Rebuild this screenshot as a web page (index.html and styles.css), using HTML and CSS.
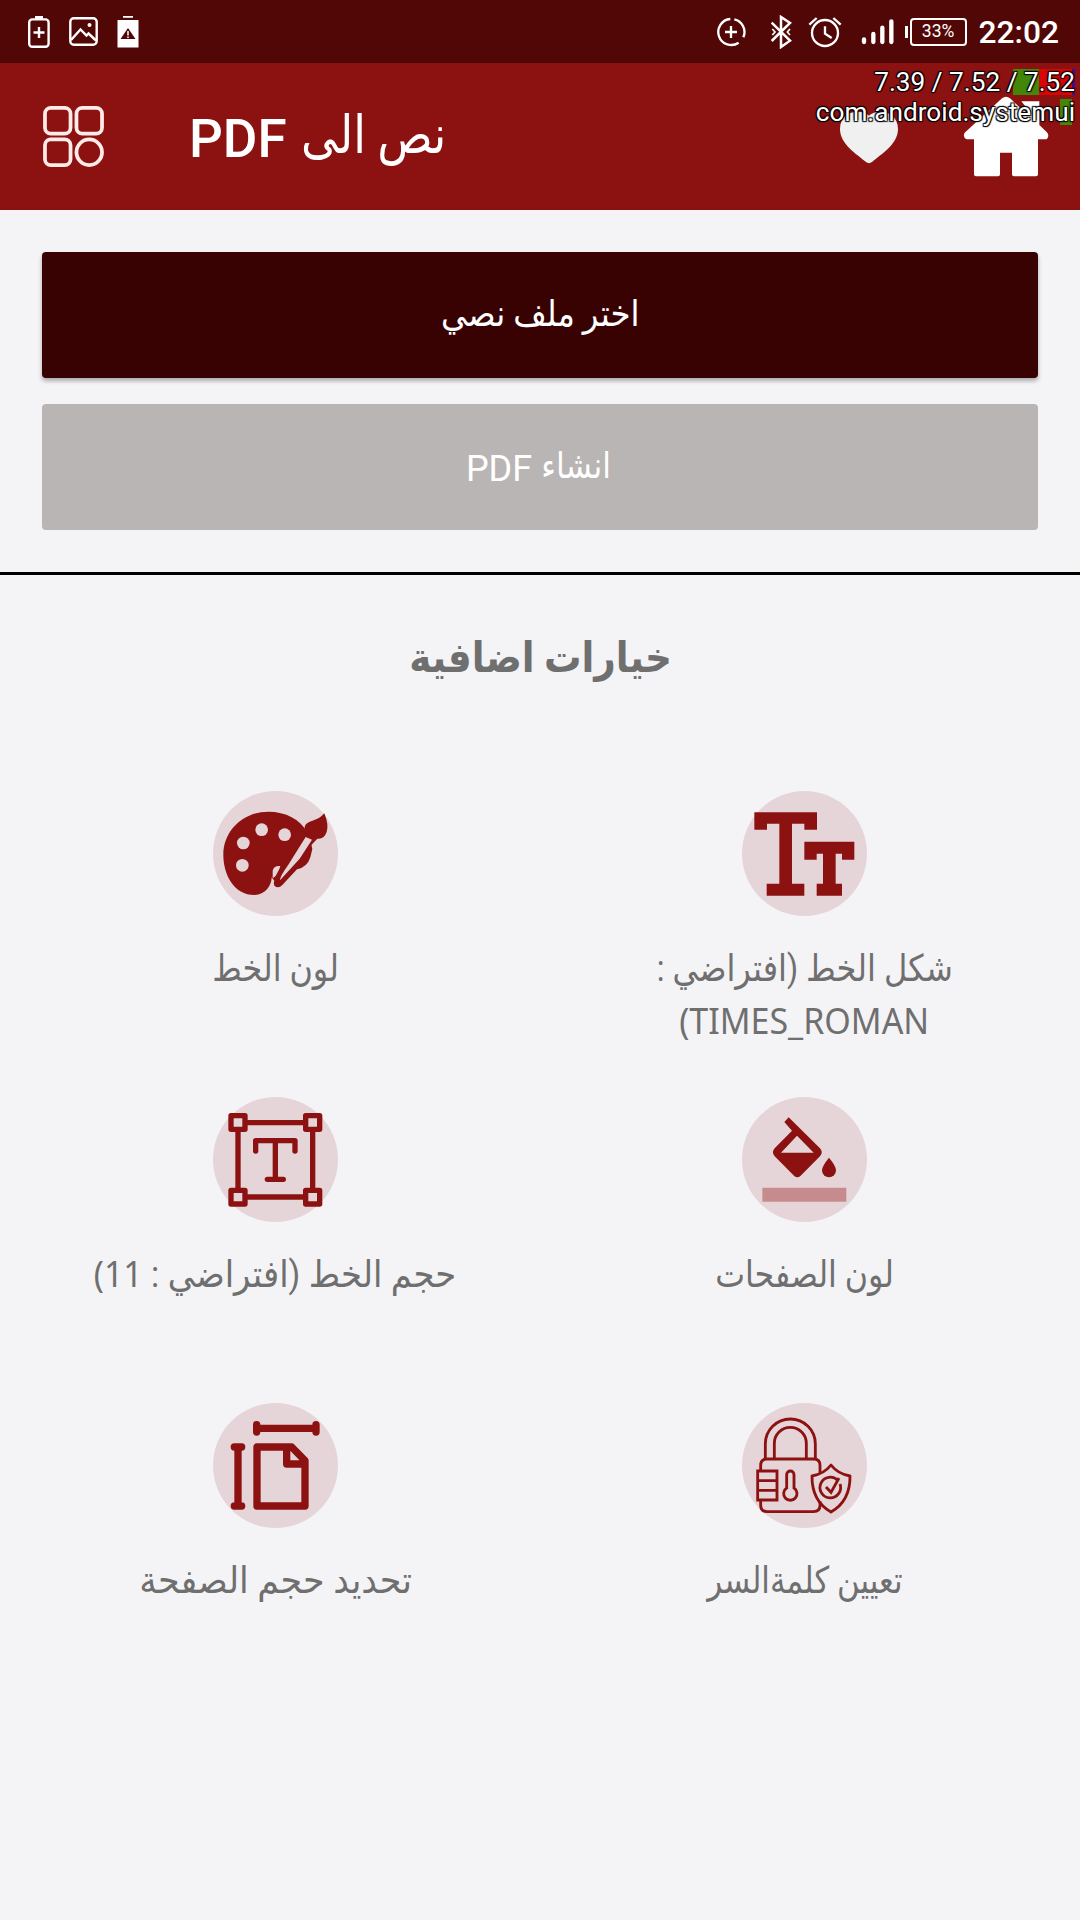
FILE: index.html
```html
<!DOCTYPE html>
<html lang="ar">
<head>
  <meta charset="UTF-8" />
  <meta name="viewport" content="width=device-width, initial-scale=1.0"/>
  <title>نص الى PDF</title>
  <link rel="stylesheet" href="styles.css">
</head>
<body>
  <div class="status-bar">
    <div class="status-left">
      <svg width="22" height="33" viewBox="0 0 22 33"><path d="M7 1h8v4H7z" fill="#fff"/><rect x="1.2" y="4.4" width="19.4" height="27.4" rx="3" fill="none" stroke="#fff" stroke-width="2.4"/><path d="M11 12v11M5.5 17.5h11" stroke="#fff" stroke-width="2.4"/></svg>
      <svg width="29" height="29" viewBox="0 0 29 29"><rect x="1.3" y="1.3" width="26.4" height="26.4" rx="3.5" fill="none" stroke="#fff" stroke-width="2.4"/><path d="M2 23l9.500-10.500 6 6 2-2 7.500 7" fill="none" stroke="#fff" stroke-width="2.4"/><circle cx="20.5" cy="8" r="2" fill="#fff"/></svg>
      <svg width="22" height="32" viewBox="0 0 22 32"><path d="M6 0h10v1.800H6zM.5 4h21v27.500H.5z" fill="#fff"/><path d="M11 12l7.500 11h-15z" fill="#520707"/><path d="M11 15v4.500M11 20.500v1.500" stroke="#fff" stroke-width="1.5"/></svg>
    </div>
    <div class="status-right">
      <svg width="30" height="34" viewBox="78 45 90 102" fill="none" stroke="#fff" stroke-width="7"><path d="M133 58A39 39 0 0 1 160 112M146 128A39 39 0 1 1 121 57"/><path d="M123 78v36M105 96h36"/></svg>
      <svg class="bluetooth" width="22" height="34" viewBox="240 44 66 102" fill="none" stroke="#fff" stroke-width="7.5"><path d="M245 67L300 121L273 140V50L300 68L245 122"/><path d="M247 86l8 9-8 9M300 86l-8 9 8 9" stroke-width="5"/></svg>
      <svg class="alarm" width="34" height="34" viewBox="354 45 102 102" fill="none" stroke="#fff" stroke-width="7"><circle cx="405" cy="99" r="39"/><path d="M405 79v22l20 13M358 74l22-20M430 54l22 20"/></svg>
      <svg class="signal" width="33" height="34" viewBox="514 45 99 102" stroke="#fff" stroke-width="13" stroke-linecap="round"><path d="M523 118v8M551 102v24M578 83v43M605 64v62"/></svg>
      <div class="battery"><span>33%</span></div>
      <span class="clock">22:02</span>
    </div>
  </div>

  <header>
    <svg class="menu" width="61" height="61" viewBox="0 0 62 62" fill="none" stroke="#fdebe8" stroke-width="3.8"><rect x="2" y="2" width="26" height="26" rx="6"/><rect x="34" y="2" width="26" height="26" rx="6"/><rect x="2" y="34" width="26" height="26" rx="6"/><circle cx="47" cy="47" r="13"/></svg>
    <h1 dir="rtl"><span class="ar">نص الى</span> <span class="pdf">PDF</span></h1>
    <svg class="heart" width="60" height="60" viewBox="447 315 180 180"><path d="M537 344C515 322 450 327 450 384C450 430 500 459 528 483Q537 490 546 483C574 459 624 430 624 384C624 327 559 322 537 344z" fill="#f0f0f0"/></svg>
    <svg class="home" width="86" height="84" viewBox="819 281 258 252"><path d="M936 294Q948 284 960 294L994 326V303H1048V374L1070 395Q1080 406 1070 417H1044V522Q1044 528 1038 528H972Q966 528 966 522V457H930V522Q930 528 924 528H858Q852 528 852 522V417H830Q817 410 824 397z" fill="#fff"/><path d="M978 303h16l16 20v14z" fill="#8c1212"/></svg>

    <div class="cpu-overlay">
      <i class="load-user"></i><i class="load-sys"></i><i class="load-irq"></i><i class="load-proc"></i>
      <p>7.39 / 7.52 / 7.52</p>
      <p>com.android.systemui</p>
    </div>
  </header>

  <div class="actions">
    <button class="btn" dir="rtl"><span class="ar w-file">اختر ملف نصي</span></button>
    <button class="btn btn-disabled" dir="rtl"><span class="ar w-create">انشاء</span> <span class="pdf">PDF</span></button>
  </div>

  <h2 dir="rtl"><span class="ar">خيارات اضافية</span></h2>

  <div class="options">
    <div class="option">
      <svg viewBox="38 31 375 375">
        <circle cx="225.5" cy="218.5" r="187.5" fill="#e6d5d8"/>
        <path d="M204 93C257 93 299 116 320 154L334 180C334 225 308 264 290 264L222 300L214 290C214 315 194 343 163 343C100 343 69 281 69 222C69 149 130 93 204 93z"/>
        <g fill="#e6d5d8"><circle cx="184" cy="147" r="19"/><circle cx="253" cy="162" r="19"/><circle cx="129" cy="187" r="19"/><circle cx="126" cy="254" r="19"/><path d="M217 293V270Q220 254 240 256L232 282z"/></g>
        <path d="M304 158L314 149C306 118 350 126 372 98Q386 132 379 154Q371 177 351 174L333 193L336 205L330 230Q321 260 290 266L246 313Q234 326 222 315Q216 300 234 271z"/>
        <path d="M316 169L335 177L298 234L239 299Q238 288 264 252z" fill="#e6d5d8"/>
      </svg>
      <p dir="rtl"><span class="ar w-color">لون الخط</span></p>
    </div>
    <div class="option">
      <svg viewBox="305 31 375 375">
        <circle cx="492.5" cy="218.5" r="187.5" fill="#e6d5d8"/>
        <path d="M342 95H530V147H492V129H455V309H492V345H379V309H417V129H380V147H342zM492 183H642V237H605V219H586V309H605V345H529V309H548V219H529V237H492z"/>
      </svg>
      <p dir="rtl"><span class="ar w-shape">شكل الخط (افتراضي :</span><br><span class="ar latin">TIMES_ROMAN)</span></p>
    </div>
    <div class="option">
      <svg viewBox="398 48 375 375">
        <circle cx="585.5" cy="235.5" r="187.5" fill="#e6d5d8"/>
        <g fill="none" stroke="#8c1212" stroke-width="16">
          <path d="M473 125H697V348H473z"/>
          <path d="M526 210V179H644V210M585 179V295M561 295H609" stroke-linecap="round" stroke-linejoin="round"/>
        </g>
        <g fill="#e6d5d8" stroke="#8c1212" stroke-width="16" stroke-linejoin="round"><path d="M452 104h42v41h-42zM676 104h42v41h-42zM452 328h42v41h-42zM676 328h42v41h-42z"/></g>
      </svg>
      <p dir="rtl"><span class="ar w-size">حجم الخط (افتراضي : <span class="num">11)</span></span></p>
    </div>
    <div class="option">
      <svg viewBox="155 48 375 375">
        <circle cx="342.5" cy="235.5" r="187.5" fill="#e6d5d8"/>
        <path d="M282 123L295 109L389 202Q400 214 389 226L331 284Q321 293 311 284L253 226Q242 214 253 202L305 149zM320 164L272 215H370z" fill-rule="evenodd"/>
        <path d="M416 230Q437 255 437 268A21 21 0 0 1 395 268Q395 255 416 230z"/>
        <path d="M216 320H468V362H216z" fill="#c68c8d"/>
      </svg>
      <p dir="rtl"><span class="ar w-pages">لون الصفحات</span></p>
    </div>
    <div class="option">
      <svg viewBox="248 37 375 375">
        <circle cx="435.5" cy="224.5" r="187.5" fill="#e6d5d8"/>
        <g fill="none" stroke="#8c1212" stroke-width="22" stroke-linecap="round" stroke-linejoin="round">
          <path d="M379 102V124M379 113H557M557 102V124M312 169H334M323 169V346M312 346H334"/>
          <path d="M380 169H484L524 210V346H380zM469 169V220H524"/>
        </g>
      </svg>
      <p dir="rtl"><span class="ar w-page-size">تحديد حجم الصفحة</span></p>
    </div>
    <div class="option">
      <svg viewBox="155 37 375 375">
        <circle cx="342.5" cy="224.5" r="187.5" fill="#e6d5d8"/>
        <g fill="none" stroke="#8c1212" stroke-width="8.5">
          <path d="M225 205V160A75 75 0 0 1 375 160V205M252 205V158A48 48 0 0 1 348 158V205"/>
          <path d="M211 241V224Q211 205 230 205H370Q389 205 389 224V249M211 328V344Q211 363 230 363H370Q389 363 389 344V332"/>
          <path d="M202 241H260V328H202zM202 270H260M202 299H260"/>
          <path d="M289 292V252A11 11 0 0 1 311 252V292A20 20 0 1 1 289 292z"/>
          <path d="M422 223Q443 250 479 256Q480 331 422 364Q364 331 365 256Q401 250 422 223z" stroke-linejoin="round"/>
          <path d="M443 270A31 31 0 1 0 449 280M407 289L422 305L446 262"/>
        </g>
      </svg>
      <p dir="rtl"><span class="ar w-password">تعيين كلمةالسر</span></p>
    </div>
  </div>
</body>
</html>
```
FILE: styles.css
```css
* { box-sizing: border-box; }
body {
  margin: 0;
  height: 1920px;
  overflow: hidden;
  background: #f4f4f6;
  color: #6f6f70;
  font-family: Roboto, "Noto Sans", "DejaVu Sans", sans-serif;
}
h1, h2, p { margin: 0; font-weight: normal; }
svg { display: block; flex: none; }

/* condensed arabic runs */
.ar {
  display: inline-block;
  white-space: nowrap;
}
h1 .ar { transform: translate(1px, -2px) scaleX(0.865); transform-origin: 0 50%; }
h2 .ar { transform: translateX(1px) scaleX(0.89); }
.w-file { transform: translateY(-1px) scaleX(0.9); }
.w-create { transform: translateY(-1px) scaleX(0.87); }
.w-color { transform: scaleX(0.86); }
.w-shape { transform: scaleX(0.867); }
.w-size { transform: scaleX(0.915); }
.w-pages { transform: scaleX(0.855); }
.w-page-size { transform: scaleX(0.943); }
.w-password { transform: scaleX(0.835); }
.pdf { position: relative; top: 2px; }

.status-bar {
  height: 63px;
  background: #520707;
  color: #fff;
  display: flex;
  justify-content: space-between;
  align-items: center;
  padding: 0 21px 0 28px;
}
.status-left { display: flex; align-items: center; gap: 19px; }
.status-right { display: flex; align-items: center; }
.bluetooth { margin-left: 24px; }
.alarm { margin-left: 16px; }
.signal { margin-left: 19px; }
.battery {
  position: relative;
  width: 57px;
  height: 28px;
  margin-left: 16px;
  border: 2.5px solid #fff;
  border-radius: 4px;
  font-size: 17.5px;
  line-height: 23px;
  text-align: center;
}
.battery::before {
  content: "";
  position: absolute;
  left: -7px;
  top: 6px;
  width: 3px;
  height: 12px;
  background: #fff;
}
.clock {
  margin-left: 12px;
  padding-top: 2px;
  font-size: 31.7px;
  font-weight: 500;
}

header {
  position: relative;
  height: 147px;
  background: #8c1212;
  color: #fff;
  display: flex;
  align-items: center;
  padding: 0 31px 2px 43px;
}
.menu { margin-top: 2px; }
h1 {
  margin: 2px auto 0 85px;
  font-size: 53px;
  font-weight: 500;
  white-space: nowrap;
}
.heart { margin-right: 64px; }
.cpu-overlay {
  position: absolute;
  top: 4px;
  right: 5px;
  font-size: 26.2px;
  line-height: 30px;
  text-align: right;
  text-shadow: 1px 1px 1px #000, -1px -1px 1px #000, 1px -1px 1px #000, -1px 1px 1px #000;
}
.cpu-overlay p { position: relative; }
.cpu-overlay i { position: absolute; top: 2px; height: 26px; }
.load-user { right: 36px; width: 26px; background: #448609; }
.load-sys { right: 3px; width: 33px; background: #d80505; }
.load-irq { right: 0; width: 3px; background: #440a8c; }
.cpu-overlay .load-proc { top: 32px; right: 3px; width: 12px; background: #448609; }

.actions {
  height: 365px;
  padding: 42px;
  border-bottom: 3px solid #000;
  display: flex;
  flex-direction: column;
  gap: 26px;
}
.btn {
  height: 126px;
  border: none;
  border-radius: 4px;
  background: #380202;
  color: #fff;
  font-family: inherit;
  font-size: 36px;
  box-shadow: 0 3px 4px rgba(0, 0, 0, 0.3);
}
.btn-disabled { background: #b9b5b4; box-shadow: none; }
.btn .pdf { margin-right: -5px; }
.btn .w-create { margin-right: -2px; }

h2 {
  height: 216px;
  padding-top: 53px;
  font-size: 42px;
  line-height: 60px;
  font-weight: 700;
  text-align: center;
}

.options {
  display: grid;
  grid-template-columns: 529px 529px;
  grid-auto-rows: 306px;
  justify-content: center;
  margin: -0.5px 0 0 -1px;
  text-align: center;
  font-size: 37px;
  line-height: 51px;
}
.option svg {
  width: 125px;
  height: 125px;
  margin: 0 auto 27px;
  fill: #8c1212;
}
.option p { padding-left: 1px; }
.latin { font-family: "Noto Sans", sans-serif; transform: scaleX(0.918); }
.num { font-family: "Noto Sans", sans-serif; line-height: 40px; }
```
